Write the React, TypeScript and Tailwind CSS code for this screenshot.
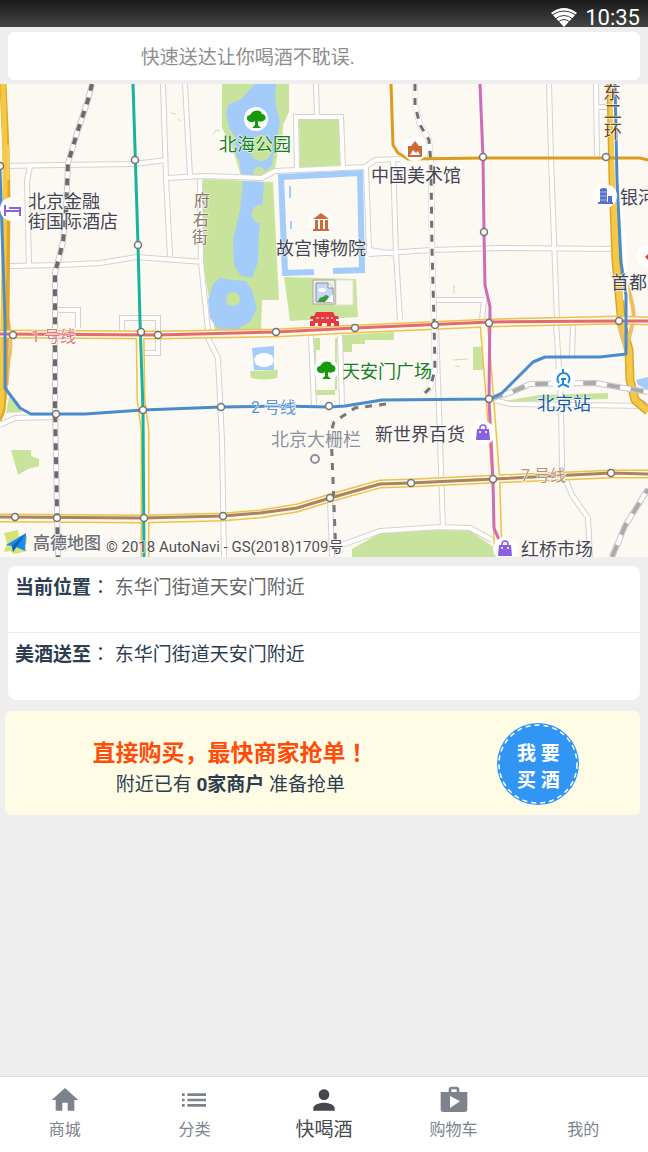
import { MdHome, MdList, MdPerson, MdShop } from 'react-icons/md'

const minorRoads = [
  'M0 166 L60 165 L135 164 L166 160',
  'M163 84 L166 178 L170 256',
  'M185 84 L190 176',
  'M166 178 L203 176 L262 178 L275 171 L365 167 L375 160 L400 159',
  'M30 166 L27 182 L29 265',
  'M9 266 L60 265 L100 263 L137 257 L203 262',
  'M200 180 L201 262 L209 340 L218 358 L222 440 L224 557',
  'M55 310 L78 310 L78 328',
  'M122 330 L122 318 L158 318 L158 353 L145 353',
  'M297 170 L296 117 L341 117 L343 168',
  'M316 84 L317 117',
  'M366 168 L369 250 L396 254 L400 320',
  'M393 159 L396 254',
  'M369 254 L432 250 L500 248 L614 249',
  'M549 84 L551 158 L557 320',
  'M596 84 L597 156',
  'M597 107 L612 107',
  'M435 300 L485 300',
  'M484 300 L482 320',
  'M311 336 L314 405',
  'M340 336 L342 405',
  'M436 325 L440 440 L443 528',
  'M556 322 L561 400 L562 470 L572 495 L588 518 L590 557',
  'M573 322 L572 357',
  'M0 425 L15 418 L60 417',
  'M336 547 L380 531 L440 527 L470 528 L492 540',
  'M490 399 L510 404 L648 406',
  'M330 498 L332 557',
]

const majorRoads = [
  'M0 334 L158 335 L276 333 L355 329 L490 323 L619 320 L648 321',
  'M0 518 L144 519 L223 517 L260 514 L297 508 L330 498 L380 484 L411 483 L494 479 L611 474 L648 474',
  'M140 330 L141 400 L145 430 L145 557',
  'M484 325 L490 400 L496 480 L498 548',
]

const stations: [number, number][] = [
  [0, 166], [135, 160], [138, 245], [483, 157], [606, 157], [484, 232],
  [13, 335], [141, 332], [158, 335], [276, 332], [355, 328], [435, 325], [489, 323], [619, 321],
  [56, 414], [143, 410], [221, 407], [329, 406], [489, 399],
  [15, 517], [57, 518], [144, 518], [223, 516], [330, 498], [411, 483], [493, 479], [611, 473],
]

const labels = [
  { text: '北京金融', x: 28, y: 208, size: 18, color: '#45454f' },
  { text: '街国际酒店', x: 28, y: 228, size: 18, color: '#45454f' },
  { text: '北海公园', x: 219, y: 151, size: 18, color: '#12801a' },
  { text: '故宫博物院', x: 276, y: 255, size: 18, color: '#45454f' },
  { text: '中国美术馆', x: 371, y: 182, size: 18, color: '#45454f' },
  { text: '银河', x: 620, y: 204, size: 18, color: '#45454f' },
  { text: '首都人', x: 611, y: 289, size: 18, color: '#45454f' },
  { text: '天安门广场', x: 342, y: 378, size: 18, color: '#12801a' },
  { text: '北京站', x: 537, y: 410, size: 18, color: '#115aa8' },
  { text: '新世界百货', x: 375, y: 441, size: 18, color: '#45454f' },
  { text: '北京大栅栏', x: 271, y: 446, size: 18, color: '#8c8f99' },
  { text: '红桥市场', x: 521, y: 556, size: 18, color: '#45454f' },
  { text: '1 号线', x: 31, y: 342, size: 16, color: '#e0787c' },
  { text: '2 号线', x: 251, y: 413, size: 16, color: '#5b95d6' },
  { text: '7 号线', x: 521, y: 481, size: 16, color: '#b59274' },
  { text: '府', x: 194, y: 206, size: 16, color: '#8d7468' },
  { text: '右', x: 193, y: 225, size: 16, color: '#8d7468' },
  { text: '街', x: 192, y: 243, size: 16, color: '#8d7468' },
  { text: '东', x: 603, y: 99, size: 18, color: '#6b4426' },
  { text: '二', x: 604, y: 118, size: 18, color: '#6b4426' },
  { text: '环', x: 604, y: 138, size: 18, color: '#6b4426' },
]

function Tree({ x, y }: { x: number; y: number }) {
  return (
    <g transform={`translate(${x} ${y})`}>
      <circle r="12" fill="#fff" />
      <path
        d="M-1 2 C-5 5 -10 2 -9 -2 C-8 -4 -5 -4 -5 -5 C-4 -9 5 -10 6 -5 C10 -5 11 1 7 2 C5 3 3 3 2 2 L2 6 L5 9 L-4 9 L-1 6 Z"
        fill="#159a0c"
      />
    </g>
  )
}

function ShopBag({ x, y }: { x: number; y: number }) {
  return (
    <g transform={`translate(${x} ${y})`}>
      <circle r="12" fill="#fff" />
      <path d="M-6 -4 H6 L7 7 H-7 Z" fill="#8a5fe0" />
      <path d="M-3 -3 V-5 A3 3 0 0 1 3 -5 V-3" fill="none" stroke="#8a5fe0" strokeWidth="1.5" />
      <circle cx="-3" cy="-1" r="1" fill="#fff" />
      <circle cx="3" cy="-1" r="1" fill="#fff" />
    </g>
  )
}

function CityMap() {
  return (
    <svg viewBox="0 84 648 473" className="block w-full bg-[#fcf9f2]" role="img" aria-label="地图">
      {/* parks */}
      <g fill="#c8e49c">
        <path d="M222 84 H289 V112 L283 125 L282 140 L278 150 L275 168 L262 177 L241 176 L233 150 L222 128 Z" />
        <path d="M203 179 L273 182 L277 260 L279 300 L262 300 L261 330 L215 332 L203 265 Z" />
        <path d="M299 119 H339 L340 165 L300 168 Z" />
        <path d="M284 277 L356 279 L358 317 L290 321 Z" />
        <path d="M341 335 L394 332 V340 H365 V344 H352 V352 H342 Z" />
        <path d="M314 338 H320 V350 H316 V390 H337 V338 H335 V395 H314 Z" />
        <path d="M250 371 L278 370 L277 378 Q264 381 251 378 Z" />
        <path d="M473 347 H483 V370 H473 Z" />
        <path d="M498 402 L540 395 L608 393 V399 Z" />
        <path d="M11 450 H31 V456 L39 459 V466 L28 469 L18 475 Z" />
        <path d="M352 557 V549 L380 533 L440 530 L470 531 L495 548 L496 557 Z" />
        <path d="M6 413 L9 396 L22 412 Z" />
      </g>
      <g fill="none" stroke="#cbe2a3" strokeWidth="1">
        <path d="M171 113 L176 114 M178 119 L181 121 M213 134 L216 130 L220 131 M453 360 L468 359 M455 366 L460 367 M454 285 V294" />
      </g>

      {/* lakes and moat */}
      <g fill="#a4ccfb">
        <path d="M255 84 L240 100 L229 104 L226 112 L229 128 L236 138 L234 150 L240 163 L241 176 H260 L272 165 L275 145 L280 122 L275 100 L276 84 Z" />
        <path d="M243 181 L264 182 L262 210 L259 232 L258 262 L252 278 L241 276 L234 266 L233 240 L240 210 Z" />
        <path d="M220 278 L213 284 L208 300 L210 318 L218 329 H238 L250 322 L257 308 L252 290 L246 281 L232 280 Z" />
        <path d="M252 348 L274 346 V370 H254 Z" />
        <path d="M636 380 L648 377 V390 L638 385 Z M642 399 L648 404 V408 L640 404 Z" />
      </g>
      <circle cx="233" cy="299" r="7" fill="#c8e49c" />
      <ellipse cx="259" cy="214" rx="7" ry="9" fill="#c8e49c" />
      <ellipse cx="261" cy="148" rx="11" ry="13" fill="#c8e49c" />
      <ellipse cx="259" cy="172" rx="6" ry="5" fill="#c8e49c" />
      <ellipse cx="264" cy="360" rx="10" ry="7" fill="#fff" />
      <path d="M314 272 L285 273 L281 177 L360 173 L362 270 L333 271" fill="none" stroke="#a4ccfb" strokeWidth="6" />
      <path d="M290 186 V198 M291 221 V229" stroke="#a4ccfb" strokeWidth="2" />
      <path d="M336 280 H353 V305 H336 Z" fill="#fcf9f2" stroke="#e6e0da" strokeWidth="1" />

      {/* streets */}
      <g fill="none" stroke="#d6d1cc" strokeWidth="6">
        {minorRoads.map((d) => (
          <path key={d} d={d} />
        ))}
      </g>
      <g fill="none" stroke="#fff" strokeWidth="4">
        {minorRoads.map((d) => (
          <path key={d} d={d} />
        ))}
      </g>

      {/* ring roads */}
      <g fill="none" strokeLinejoin="round">
        <path d="M8 318 Q13 345 9 360 L7 385" stroke="#efbd62" strokeWidth="3" />
        <path d="M3 84 L6 150 L7 200 L6 320 L4 390 L2 410 L-2 420" stroke="#e0a72c" strokeWidth="7" />
        <path d="M3 84 L5 150 L5 200 L3 320 L2 390 L1 408 L-3 418" stroke="#f6c83f" strokeWidth="5" />
        <path d="M611 84 L613 180 L616 260 L622 325 L629 350 L630 380 L635 400 L648 411" stroke="#dda42c" strokeWidth="9" />
        <path d="M611 84 L613 180 L616 260 L622 325 L629 350 L630 380 L635 400 L648 411" stroke="#f5c945" strokeWidth="6" />
        <path d="M625 280 Q636 310 633 322 L626 350 M618 322 L626 350" stroke="#efbd62" strokeWidth="4" />
        <path d="M615 84 L618 180 L624 270 L626 300" stroke="#fff" strokeWidth="6" />
        <path d="M8 145 V180" stroke="#f3cf62" strokeWidth="3" />
      </g>
      <g fill="none" stroke="#eec04d" strokeWidth="9">
        {majorRoads.map((d) => (
          <path key={d} d={d} />
        ))}
      </g>
      <g fill="none" stroke="#fff9e8" strokeWidth="6">
        {majorRoads.map((d) => (
          <path key={d} d={d} />
        ))}
      </g>

      {/* railways */}
      <g fill="none">
        <path d="M92 84 L88 100 L78 130 L68 163 L66 210 L63 242 L55 273 L55 410 L58 557" stroke="#cfcbc8" strokeWidth="6" />
        <path d="M92 84 L88 100 L78 130 L68 163 L66 210 L63 242 L55 273 L55 410 L58 557" stroke="#fff" strokeWidth="4" />
        <path d="M92 84 L88 100 L78 130 L68 163 L66 210 L63 242 L55 273 L55 410 L58 557" stroke="#6b6b6b" strokeWidth="4" strokeDasharray="7 7" />
        <path d="M415 84 L415 105 L420 125 L429 140 L431 165 L432 250 L434 320 L435 370 L430 388 L422 396" stroke="#d6d1cc" strokeWidth="6" />
        <path d="M415 84 L415 105 L420 125 L429 140 L431 165 L432 250 L434 320 L435 370 L430 388 L422 396" stroke="#fff" strokeWidth="5" />
        <path d="M415 84 L415 105 L420 125 L429 140 L431 165 L432 250 L434 320 L435 370 L430 388 L422 396" stroke="#707070" strokeWidth="3" strokeDasharray="7 7" />
        <path d="M386 404 L355 408 L334 422 L331 432 L333 480 L336 557" stroke="#777" strokeWidth="3" strokeDasharray="7 7" />
        <path d="M490 399 L512 392 L530 384 L595 383 L648 392 M612 557 L625 526 L648 489" stroke="#c7c7c7" strokeWidth="6" />
        <path d="M490 399 L512 392 L530 384 L595 383 L648 392 M612 557 L625 526 L648 489" stroke="#fff" strokeWidth="4" />
        <path d="M490 399 L512 392 L530 384 L595 383 L648 392 M612 557 L625 526 L648 489" stroke="#aaa" strokeWidth="4" strokeDasharray="13 11" />
      </g>

      {/* subway lines */}
      <g fill="none" strokeWidth="3" strokeLinejoin="round">
        <path d="M391 84 L393 145 L398 153 L408 159 L483 158 L606 158 L640 158 L648 160" stroke="#d99e1b" />
        <path d="M0 334 L158 335 L276 332 L355 328 L490 322 L619 321 L648 321" stroke="#e26b72" />
        <path d="M0 517 L144 518 L223 516 L260 513 L297 508 L330 498 L380 484 L411 483 L494 479 L611 473 L648 474" stroke="#a98461" />
        <path
          d="M0 170 L5 320 L5 388 L20 408 L31 414 L85 414 L143 410 L221 407 L280 406 L329 407 L345 406 L382 400 L490 399 L502 393 L533 362 L545 357 L600 357 L626 354 L626 295 L621 262 L617 180 L615 84"
          stroke="#4a8ccb"
        />
        <path d="M133 84 L138 245 L140 320 L143 410 L144 557" stroke="#17b39b" />
        <path d="M480 84 L483 158 L484 232 L485 285 L490 307 L489 400 L493 480 L494 528 L500 542" stroke="#cf6bb8" />
      </g>
      <g fill="#fff" stroke="#737373" strokeWidth="1.5">
        {stations.map(([x, y]) => (
          <circle key={`${x}-${y}`} cx={x} cy={y} r="3.5" />
        ))}
      </g>
      <circle cx="315" cy="459" r="4" fill="#fff" stroke="#8c8f99" strokeWidth="2" />

      {/* places */}
      <Tree x={256} y={119} />
      <Tree x={326} y={370} />
      <ShopBag x={483} y={433} />
      <ShopBag x={505} y={549} />
      <circle cx="12" cy="209" r="12" fill="#fff" />
      <path d="M5 205 V216 M5 211 H20 V216 M9 208 H20 V211" fill="none" stroke="#8a5fe0" strokeWidth="2" />
      <circle cx="321" cy="223" r="12" fill="#fff" />
      <path d="M321 213 L329 219 H313 Z M315 220 H318 V229 H315 Z M320 220 H323 V229 H320 Z M325 220 H328 V229 H325 Z M313 229 H329 V231 H313 Z" fill="#cc6a39" />
      <circle cx="415" cy="149" r="12" fill="#fff" />
      <path d="M408 146 H422 V157 H408 Z M411 146 L415 141 L419 146 Z" fill="#cc6a39" />
      <path d="M410 155 L413 150 L416 153 L418 151 L420 155 Z" fill="#fff" />
      <circle cx="605" cy="196" r="12" fill="#fff" />
      <path d="M600 189 Q604 187 607 189 V203 H600 Z M608 196 H612 V203 H608 Z M598 202 H613 V204 H598 Z" fill="#566fcf" />
      <path d="M600 192 H607 M600 196 H607 M600 200 H607" stroke="#a9b6e8" strokeWidth="1" />
      <circle cx="648" cy="256" r="11" fill="#fff" />
      <path d="M645 257 L648 254 V260 Z" fill="#e0433f" />
      <circle cx="563" cy="379" r="12" fill="#fff" />
      <path d="M559 383 A6 6 0 1 1 568 383 M563 369 V373 M561 379 H566 M563 379 V385 M558 387 L563 384 L569 387" fill="none" stroke="#1e88e5" strokeWidth="2" />

      {/* Tiananmen gate */}
      <path d="M316 312 H333 L335 316 H338 L339 319 H336 V321 H339 V326 H334 V323 H331 V326 H327 V323 H322 V326 H318 V323 H315 V326 H310 V321 H313 V319 H310 L311 316 H314 Z" fill="#e63a40" />
      <path d="M316 318 H333" stroke="#fff" strokeWidth="1" strokeDasharray="3 2" />

      {/* position marker whose image is missing */}
      <path d="M313 280 H335 V304 H313 Z" fill="#eee" stroke="#a8a8a8" strokeWidth="1" />
      <path d="M316 283 H328 L333 288 V302 H316 Z" fill="#c5d8f7" stroke="#8d8d8d" strokeWidth="1" />
      <path d="M328 283 V288 H333" fill="#fff" stroke="#8d8d8d" strokeWidth="1" />
      <path d="M318 302 Q319 297 323 297 Q326 293 329 297 L325 302 Z" fill="#3c9a3a" />
      <ellipse cx="322" cy="290" rx="4" ry="2" fill="#fff" />
      <path d="M325 302 L333 294 V302 Z" fill="#fff" />

      <path d="M4 533 L18 530 L19 536 H27 V543 L24 546 L27 551 L14 554 L10 551 L4 552 L7 543 Z" fill="#d5e27a" />
      <path d="M6 545 L26 533 L25 551 L16 547 L13 552 L12 546 Z" fill="#1b8cf2" />
      <path d="M26 533 L12 546 L13 552 Z" fill="#0e62bd" />

      <g className="font-['Roboto','Noto_Sans_CJK_SC',sans-serif]" stroke="#fff" strokeWidth="1" paintOrder="stroke">
        {labels.map((label) => (
          <text key={label.text + label.y} x={label.x} y={label.y} fontSize={label.size} fill={label.color}>
            {label.text}
          </text>
        ))}
        <text x="33" y="549" fontSize="17" fontWeight="500" fill="#6d6f74">高德地图</text>
        <text x="106" y="552" fontSize="15" fill="#4e4e52">© 2018 AutoNavi - GS(2018)1709号</text>
      </g>
    </svg>
  )
}

// full-width punctuation centred in its box
function Mark({ children }: { children: string }) {
  return <span className="font-['Noto_Sans_CJK_TC',sans-serif]">{children}</span>
}

const tabs = [
  { label: '商城', icon: MdHome, active: false },
  { label: '分类', icon: MdList, active: false },
  { label: '快喝酒', icon: MdPerson, active: true },
  { label: '购物车', icon: MdShop, active: false },
  { label: '我的', icon: null, active: false },
]

export default function App() {
  return (
    <div className="flex min-h-screen flex-col bg-[#eeeeee] font-['Roboto','Noto_Sans_CJK_SC',sans-serif] text-[19px] text-[#2c3e50]">
      <header className="flex h-[27px] items-end justify-end gap-2 bg-linear-to-b from-[#1a1a1a] to-[#454545] pr-2 text-white">
        <svg viewBox="0 0 26 19" className="h-[19px] w-[26px]" aria-hidden="true">
          <path d="M0 5 Q13 -5 26 5 L13 19 Z" fill="#fff" />
          <path d="M1 7 Q13 -1 25 7 M4 11 Q13 4 22 11 M7 14 Q13 9 19 14" fill="none" stroke="#3c3c3c" strokeWidth="1" />
        </svg>
        <span className="text-[22px] leading-[18px]">10:35</span>
      </header>

      <main className="flex-1">
        <div className="px-2 pt-[5px] pb-1">
          <p className="h-12 rounded-md bg-white pt-[2px] pl-[21%] leading-[48px] text-[#8e8e8e]">快速送达让你喝酒不耽误.</p>
        </div>

        <CityMap />

        <section className="mx-2 mt-[9px] rounded-lg bg-white">
          <p className="h-[67px] border-b border-[#ececec] px-[7px] pt-2 leading-6">
            <b>当前位置</b>
            <Mark>：</Mark> <span className="text-[#666666]">东华门街道天安门附近</span>
          </p>
          <p className="h-[67px] px-[7px] pt-2 leading-6">
            <b>美酒送至</b>
            <Mark>：</Mark> <span>东华门街道天安门附近</span>
          </p>
        </section>

        <section className="mt-[11px] mr-2 ml-[5px] flex h-[104px] items-center rounded-md bg-[#fffce6]">
          <div className="w-[71%] pt-[10px] text-center leading-[31px]">
            <h2 className="text-[23px] font-bold text-[#ff4c0a]">
              直接购买，最快商家抢单<Mark>！</Mark>
            </h2>
            <p>
              附近已有 <b>0家商户</b> 准备抢单
            </p>
          </div>
          <div className="flex w-[26%] justify-center pt-[2px]">
            <button className="relative h-[82px] w-[82px] rounded-full bg-[#3095f3] pt-[6px] leading-[27px] font-bold text-white">
              <svg viewBox="0 0 82 82" className="absolute inset-0" aria-hidden="true">
                <circle cx="41" cy="41" r="39" fill="none" stroke="#fff" strokeWidth="1.5" strokeDasharray="5 4" />
              </svg>
              我 要
              <br />
              买 酒
            </button>
          </div>
        </section>
      </main>

      <nav className="grid h-[76px] grid-cols-5 border-t border-[#dddddd] bg-white">
        {tabs.map(({ label, icon: Icon, active }) => (
          <a
            key={label}
            href="#"
            className={`flex flex-col items-center pt-[7px] ${active ? 'text-[19px] text-[#45494e]' : 'text-[16px] text-[#7d838c]'}`}
          >
            <span className="h-[34px]">{Icon && <Icon size={32} />}</span>
            <span className="leading-6">{label}</span>
          </a>
        ))}
      </nav>
    </div>
  )
}
